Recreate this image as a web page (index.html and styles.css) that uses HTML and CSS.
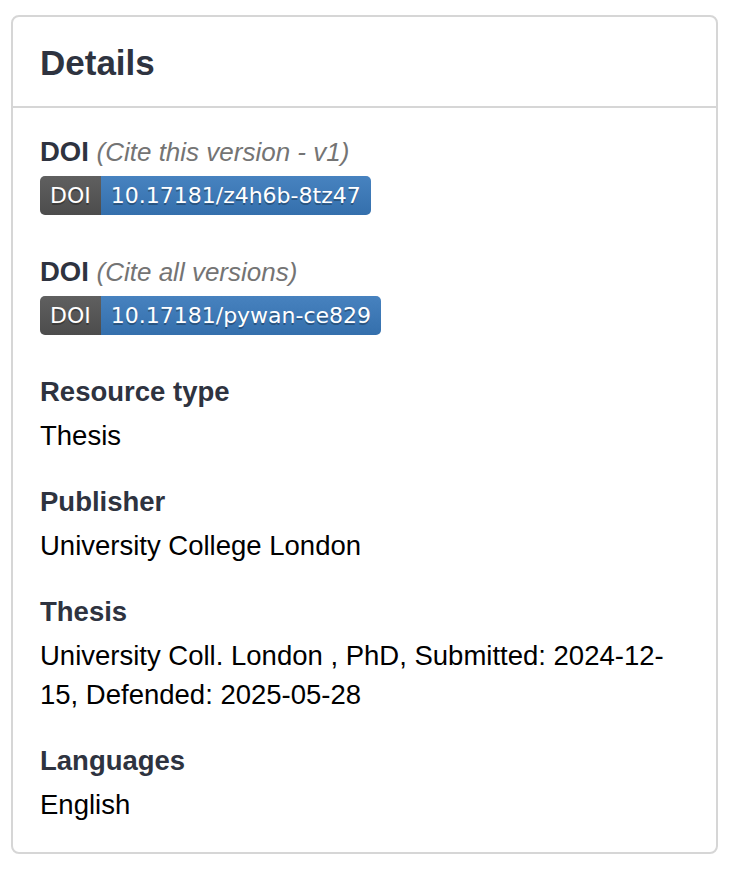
FILE: index.html
```html
<!DOCTYPE html>
<html lang="en">
<head>
    <meta charset="UTF-8">
    <meta name="viewport" content="width=device-width, initial-scale=1.0">
    <title>Details</title>
    <link rel="stylesheet" href="styles.css">
</head>
<body>
    <div class="card">
        <div class="card-header">
            <h2>Details</h2>
        </div>
        <div class="card-body">
            <div class="field doi-field">
                <div class="field-label">DOI <span class="field-note">(Cite this version - v1)</span></div>
                <div class="badge">
                    <span class="badge-key">DOI</span>
                    <span class="badge-value">10.17181/z4h6b-8tz47</span>
                </div>
            </div>
            <div class="field doi-field">
                <div class="field-label">DOI <span class="field-note">(Cite all versions)</span></div>
                <div class="badge">
                    <span class="badge-key">DOI</span>
                    <span class="badge-value">10.17181/pywan-ce829</span>
                </div>
            </div>
            <div class="field">
                <div class="field-label">Resource type</div>
                <div class="field-value">Thesis</div>
            </div>
            <div class="field">
                <div class="field-label">Publisher</div>
                <div class="field-value">University College London</div>
            </div>
            <div class="field">
                <div class="field-label">Thesis</div>
                <div class="field-value">University Coll. London , PhD, Submitted: 2024-12-15, Defended: 2025-05-28</div>
            </div>
            <div class="field">
                <div class="field-label">Languages</div>
                <div class="field-value">English</div>
            </div>
        </div>
    </div>
</body>
</html>
```

FILE: styles.css
```css
body {
    margin: 0;
    background-color: #ffffff;
    font-family: "Liberation Sans", Arial, sans-serif;
}

.card {
    margin: 15px 18px 0 11px;
    border: 2px solid #d6d6d6;
    border-radius: 8px;
}

.card-header {
    padding: 26px 27px 23px;
    border-bottom: 2px solid #d6d6d6;
}

.card-header h2 {
    margin: 0;
    font-size: 35px;
    line-height: 40px;
    font-weight: bold;
    color: #2e3340;
}

.card-body {
    padding: 24px 22px 28px 27px;
}

.field {
    margin-bottom: 27px;
}
.field:last-child {
    margin-bottom: 0;
}
.doi-field {
    margin-bottom: 37px;
}

.field-label {
    font-size: 27.5px;
    line-height: 39px;
    font-weight: bold;
    color: #2e3340;
    margin-bottom: 5px;
}

.doi-field .field-label {
    margin-bottom: 4px;
}

.field-note {
    font-size: 26px;
    font-weight: normal;
    font-style: italic;
    color: #747474;
}

.field-value {
    font-size: 27.5px;
    line-height: 39px;
    color: #000000;
}

.badge {
    display: inline-flex;
    height: 39px;
    border-radius: 5px;
    overflow: hidden;
    font-family: "DejaVu Sans", Verdana, sans-serif;
    font-size: 22px;
    line-height: 39px;
    color: #ffffff;
    text-shadow: 0 2px 0 rgba(1, 1, 1, 0.3);
}

.badge-key {
    padding: 0 10px;
    background: linear-gradient(to bottom, rgba(187, 187, 187, 0.1), rgba(0, 0, 0, 0.1)), #555555;
}

.badge-value {
    padding: 0 10px;
    background: linear-gradient(to bottom, rgba(187, 187, 187, 0.1), rgba(0, 0, 0, 0.1)), #3a7cc0;
}
```
